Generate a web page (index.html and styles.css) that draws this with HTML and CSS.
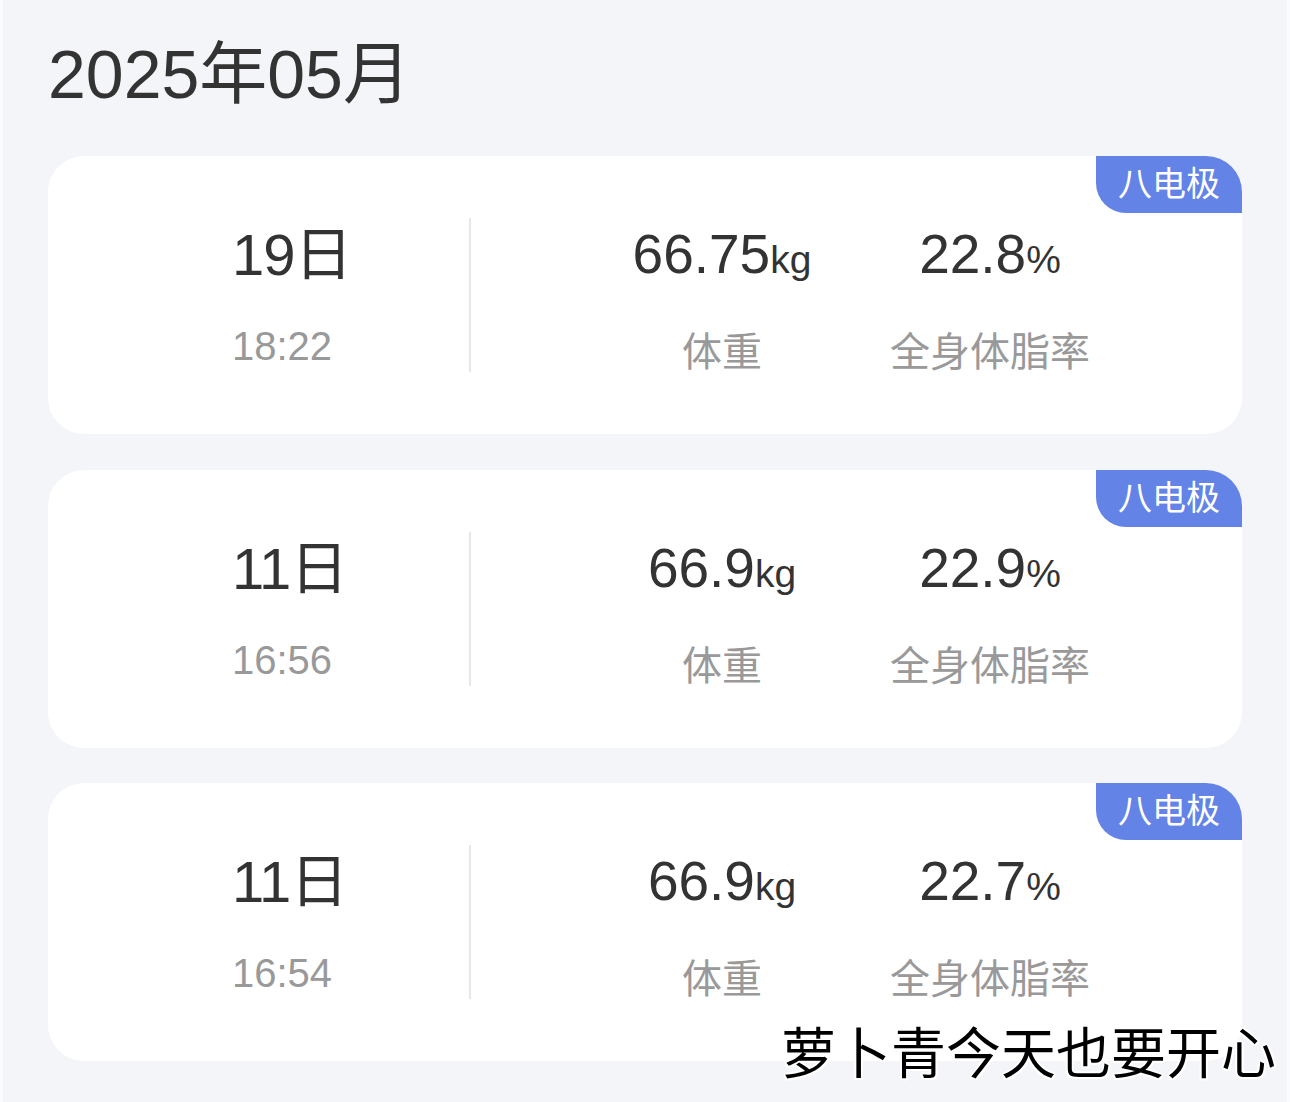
FILE: index.html
```html
<!DOCTYPE html>
<html lang="zh-CN">
<head>
<meta charset="utf-8">
<title>体重记录</title>
<link rel="stylesheet" href="styles.css">
</head>
<body>
<div class="page">
  <h1 class="month">2025年05月</h1>
  <div class="list">
    <div class="card">
      <div class="badge">八电极</div>
      <div class="when">
        <div class="day">19日</div>
        <div class="time">18:22</div>
      </div>
      <div class="divider"></div>
      <div class="metrics">
        <div class="metric">
          <div class="value">66.75<span class="unit">kg</span></div>
          <div class="label">体重</div>
        </div>
        <div class="metric">
          <div class="value">22.8<span class="unit">%</span></div>
          <div class="label">全身体脂率</div>
        </div>
      </div>
    </div>
    <div class="card">
      <div class="badge">八电极</div>
      <div class="when">
        <div class="day">11日</div>
        <div class="time">16:56</div>
      </div>
      <div class="divider"></div>
      <div class="metrics">
        <div class="metric">
          <div class="value">66.9<span class="unit">kg</span></div>
          <div class="label">体重</div>
        </div>
        <div class="metric">
          <div class="value">22.9<span class="unit">%</span></div>
          <div class="label">全身体脂率</div>
        </div>
      </div>
    </div>
    <div class="card">
      <div class="badge">八电极</div>
      <div class="when">
        <div class="day">11日</div>
        <div class="time">16:54</div>
      </div>
      <div class="divider"></div>
      <div class="metrics">
        <div class="metric">
          <div class="value">66.9<span class="unit">kg</span></div>
          <div class="label">体重</div>
        </div>
        <div class="metric">
          <div class="value">22.7<span class="unit">%</span></div>
          <div class="label">全身体脂率</div>
        </div>
      </div>
    </div>
  </div>
  <div class="watermark">萝卜青今天也要开心</div>
</div>
</body>
</html>
```
FILE: styles.css
```css
html, body {
  margin: 0;
  padding: 0;
  background: #f4f5f9;
}

body {
  font-family: "Liberation Sans", "Noto Sans CJK SC", sans-serif;
  color: #333333;
}

.page {
  position: relative;
  height: 1102px;
  overflow: hidden;
  box-sizing: border-box;
  padding: 34px 48px 0 48px;
  border-left: 3px solid #fbfbfd;
  border-right: 3px solid #fbfbfd;
}

.month {
  margin: 0 0 0 -3px;
  font-size: 68px;
  line-height: 80px;
  font-weight: 400;
  color: #333333;
}

.list {
  margin: 42px 0 0 -3px;
  width: 1194px;
  display: flex;
  flex-direction: column;
  gap: 35.5px;
}

.card {
  position: relative;
  height: 278px;
  background: #ffffff;
  border-radius: 36px;
  overflow: hidden;
  display: flex;
  align-items: center;
}

.badge {
  position: absolute;
  top: 0;
  right: 0;
  width: 146px;
  height: 57px;
  background: #6383e7;
  color: #ffffff;
  border-bottom-left-radius: 30px;
  font-size: 34px;
  line-height: 57px;
  text-align: center;
}

.when {
  width: 237px;
  padding-left: 184px;
  padding-top: 3px;
  display: flex;
  flex-direction: column;
  gap: 35px;
}

.day {
  font-size: 58px;
  line-height: 64px;
  color: #333333;
  letter-spacing: -1px;
}

.time {
  font-size: 40px;
  line-height: 48px;
  color: #999999;
}

.divider {
  width: 2px;
  height: 154px;
  background: #e6e6ec;
}

.metrics {
  align-self: flex-start;
  margin-top: 66px;
  margin-left: 117px;
  display: grid;
  grid-template-columns: 268px 268px;
}

.metric {
  display: flex;
  flex-direction: column;
  align-items: center;
  gap: 36px;
}

.value {
  font-size: 55px;
  line-height: 64px;
  color: #333333;
  white-space: nowrap;
}

.unit {
  font-size: 39px;
}

.label {
  font-size: 40px;
  line-height: 48px;
  color: #999999;
  white-space: nowrap;
}

.watermark {
  position: absolute;
  top: 1017px;
  right: 11px;
  font-family: "Noto Sans CJK SC", sans-serif;
  font-size: 55px;
  line-height: 64px;
  font-weight: 400;
  color: #000000;
  white-space: nowrap;
  text-shadow:
    2px 0 0 #fff, -2px 0 0 #fff, 0 2px 0 #fff, 0 -2px 0 #fff,
    1.5px 1.5px 0 #fff, -1.5px 1.5px 0 #fff, 1.5px -1.5px 0 #fff, -1.5px -1.5px 0 #fff;
}
```
